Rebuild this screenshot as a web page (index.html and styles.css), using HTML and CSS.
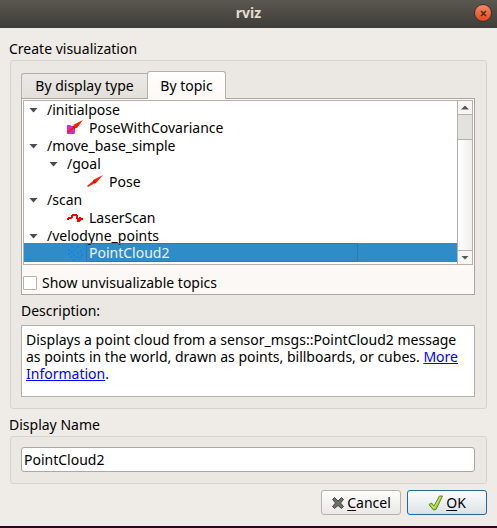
FILE: index.html
```html
<!DOCTYPE html>
<html lang="en">
<head>
<meta charset="utf-8">
<title>rviz</title>
<link rel="stylesheet" href="styles.css">
</head>
<body>
<header class="titlebar">
  <h1 class="title">rviz</h1>
  <button class="close" type="button" aria-label="Close">
    <svg width="7" height="7" viewBox="0 0 7 7"><path d="M1 1l5 5M6 1l-5 5" stroke="#4a2a1a" stroke-width="1.5"/></svg>
  </button>
</header>
<form class="dialog">
  <h2 class="heading">Create visualization</h2>
  <section class="group group-main">
    <div class="tabs" role="tablist">
      <button class="tab" type="button" role="tab" aria-selected="false">By display type</button>
      <button class="tab tab-active" type="button" role="tab" aria-selected="true">By topic</button>
    </div>
    <div class="pane" role="tabpanel">
      <div class="tree-box">
        <ul class="tree" role="tree">
          <li class="row" role="treeitem"><button class="arrow" type="button" aria-label="Collapse"></button>/initialpose</li>
          <li class="row leaf" role="treeitem">
            <svg class="icon" width="16" height="16" viewBox="0 0 16 16"><path d="M0 5h3l2 1h2l1 3v4l-1 1H0z" fill="#c832c8"/><path d="M0 12L7 6 6 5 16 0 10 8 8 8l-7 5z" fill="#ff1e00"/><path d="M6 6l3 2-2 1z" fill="#b01400"/></svg>
            <span class="label">PoseWithCovariance</span></li>
          <li class="row" role="treeitem"><button class="arrow" type="button" aria-label="Collapse"></button>/move_base_simple</li>
          <li class="row level-2" role="treeitem"><button class="arrow" type="button" aria-label="Collapse"></button>/goal</li>
          <li class="row leaf leaf-deep" role="treeitem">
            <svg class="icon" width="16" height="16" viewBox="0 0 16 16"><path d="M0 12L6 7 6 6 16 1 9 9 8 9l-7 4z" fill="#ff1e00"/><path d="M6 7l3 1-1 2z" fill="#b01400"/></svg>
            <span class="label">Pose</span></li>
          <li class="row" role="treeitem"><button class="arrow" type="button" aria-label="Collapse"></button>/scan</li>
          <li class="row leaf" role="treeitem">
            <svg class="icon" width="16" height="16" viewBox="0 0 16 16"><path d="M0 8h2v2H0zM1 7h4v2H1zM4 5h2v3H4zM5 4h5v2H5zM9 5h2v4H9zM10 8h2v4h-2zM11 10h2v2h-2zM12 7h2v4h-2zM13 8h3v2h-3z" fill="#f00"/></svg>
            <span class="label">LaserScan</span></li>
          <li class="row" role="treeitem"><button class="arrow" type="button" aria-label="Collapse"></button>/velodyne_points</li>
          <li class="row leaf selected" role="treeitem" aria-selected="true">
            <svg class="icon" width="16" height="16" viewBox="0 0 16 16"><path d="M5 1h2v2H5zM10 1h2v2h-2zM1 4h2v2H1zM7 4h2v2H7zM13 5h2v2h-2zM4 6h2v2H4zM10 7h2v2h-2zM1 8h2v2H1zM6 9h2v2H6zM14 9h2v2h-2zM3 11h2v2H3zM9 11h2v2H9zM12 12h2v2h-2zM6 14h2v2H6z" fill="#1785e4"/></svg>
            <span class="label current">PointCloud2</span></li>
        </ul>
        <div class="scrollbar" aria-hidden="true">
          <span class="step"><i class="tri tri-up"></i></span>
          <span class="groove"></span>
          <span class="thumb"></span>
          <span class="step step-down"><i class="tri"></i></span>
        </div>
      </div>
      <label class="check"><input type="checkbox">Show unvisualizable topics</label>
    </div>
    <h3 class="heading description-heading">Description:</h3>
    <p class="description">Displays a point cloud from a sensor_msgs::PointCloud2 message as points in the world, drawn as points, billboards, or cubes. <a href="#more">More Information</a>.</p>
  </section>
  <label class="heading name-heading" for="display-name">Display Name</label>
  <section class="group group-name">
    <input class="name" id="display-name" type="text" value="PointCloud2">
  </section>
  <footer class="actions">
    <button class="button" type="button">
      <svg width="14" height="14" viewBox="0 0 14 14"><path d="M3.5 1.5L7 5l3.500-3.500 2 2L9.500 7l3 3.500-2 2L7 9.500l-3.500 3-2-2L4.500 7l-3-3.500z" fill="#6c6c6a" stroke="#484846" stroke-linejoin="round"/></svg>
      <span><u>C</u>ancel</span>
    </button>
    <button class="button button-ok" type="submit">
      <svg width="16" height="16" viewBox="0 0 16 16"><path d="M1 9.500l2.500-1.500L6 11 11.500 1l3 0L8 14.500l-2.500 0.500z" fill="#a4cf3c" stroke="#5f8a1c" stroke-linejoin="round"/><path d="M3 9.500l3 3.500L12.500 2" fill="none" stroke="#cde87a"/></svg>
      <span><u>O</u>K</span>
    </button>
  </footer>
</form>
</body>
</html>
```
FILE: styles.css
```css
* { box-sizing: border-box; }

body {
  margin: 0;
  min-height: 100vh;
  display: flex;
  flex-direction: column;
  background: #efebe7;
  border-bottom: 2px solid #2c001e;
  color: #000;
  font: 14px/18px "Noto Sans", "Open Sans", sans-serif;
}

button, input { font: inherit; color: inherit; margin: 0; }

.titlebar {
  display: grid;
  grid-template-columns: 20px 1fr 20px;
  align-items: center;
  height: 28px;
  padding: 0 3px 2px;
  background: linear-gradient(#5a574f, #3e3d38);
}

.title {
  grid-column: 2;
  margin: 0;
  text-align: center;
  font-size: 14px;
  line-height: 18px;
  color: #e2dccf;
}

.close {
  display: flex;
  align-items: center;
  justify-content: center;
  width: 18px;
  height: 18px;
  padding: 0;
  border: 1px solid #35332e;
  border-radius: 50%;
  background: linear-gradient(#f58a68, #e2491c);
}

.dialog { padding: 12px 10px 10px 9px; }

.heading {
  display: block;
  margin: 0;
  font-size: 14px;
  font-weight: 400;
  line-height: 18px;
}

.group {
  border: 1px solid #d6d2ce;
  border-radius: 3px;
  background: #ebe8e4;
  padding: 10px 11px 11px 10px;
}

.dialog > .group { margin-left: 1px; }

.group-main { margin-top: 2px; }

.tabs { display: flex; align-items: flex-end; }

.tab {
  height: 25px;
  padding: 0 11px;
  border: 1px solid #b4b0ac;
  border-right: 0;
  border-bottom: 0;
  border-radius: 3px 0 0 0;
  background: linear-gradient(#ebe8e5, #e3e0dc);
  flex: 0 0 126px;
}

.tab-active {
  height: 28px;
  margin-bottom: -1px;
  border-right: 1px solid #b4b0ac;
  border-radius: 3px 3px 0 0;
  background: linear-gradient(#fff, #fcf8f5);
  flex-basis: 79px;
  z-index: 1;
}

.pane {
  border: 1px solid #a9a5a2;
  background: #fcf8f5;
  padding: 1px 1px 2px;
}

.tree-box {
  display: flex;
  border: 1px solid #b4b1ae;
  background: #fff;
}

.tree {
  flex: 1;
  margin: 0;
  padding: 0 0 2px;
  list-style: none;
}

.row {
  display: flex;
  align-items: center;
  height: 18px;
  padding-left: 4px;
}

.level-2 { padding-left: 24px; }
.leaf { padding-left: 43px; }
.leaf-deep { padding-left: 63px; }

.arrow {
  width: 19px;
  height: 18px;
  padding: 0 0 0 1px;
  border: 0;
  background: none;
}

.arrow::before {
  content: "";
  display: block;
  width: 9px;
  height: 5px;
  background: #4c4c4c;
  clip-path: polygon(0 0, 100% 0, 50% 100%);
}

.icon { flex: none; margin-right: 3px; }
.label { padding-left: 3px; }

.selected {
  height: 19px;
  margin-top: -2px;
  background: #308cc6;
  color: #eaf2f8;
}

.current {
  width: 272px;
  height: 19px;
  padding-left: 2px;
  border: 1px solid #2a7cb0;
  border-radius: 1px;
  line-height: 17px;
}

.scrollbar {
  display: flex;
  flex-direction: column;
  width: 15px;
  border-left: 1px solid #b4b1ae;
}

.step {
  display: flex;
  align-items: center;
  justify-content: center;
  height: 14px;
  border-bottom: 1px solid #b4b1ae;
  background: #f7f6f5;
}

.step-down { border-top: 1px solid #b4b1ae; border-bottom: 0; }

.tri {
  width: 8px;
  height: 4px;
  background: #555;
  clip-path: polygon(0 0, 100% 0, 50% 100%);
}

.tri-up { clip-path: polygon(50% 0, 100% 100%, 0 100%); }

.groove { height: 25px; background: #e3e2df; border-bottom: 1px solid #b4b1ae; }
.thumb { flex: 1; background: linear-gradient(90deg, #fff, #f0efec); }

.check {
  display: flex;
  align-items: center;
  gap: 5px;
  margin-top: 9px;
}

.check input {
  appearance: none;
  width: 14px;
  height: 14px;
  border: 1px solid #b4b1ae;
  border-radius: 1px;
  background: #fff;
}

.description-heading { margin-top: 7px; }

.description {
  min-height: 72px;
  margin: 5px 0 0;
  padding: 5px 4px;
  border: 1px solid #b4b1ae;
  background: #fff;
  line-height: 17px;
}

.description a { color: #00f; }

.name-heading { margin-top: 7px; }
.group-name { margin-top: 2px; }

.name {
  display: block;
  width: 100%;
  height: 25px;
  padding: 0 2px;
  border: 1px solid #aaa7a4;
  border-radius: 3px;
  background: #fff;
}

.actions {
  display: flex;
  justify-content: flex-end;
  gap: 6px;
  margin-top: 6px;
}

.button {
  display: flex;
  align-items: center;
  justify-content: center;
  gap: 2px;
  width: 80px;
  height: 25px;
  padding: 0;
  border: 1px solid #b4b1ae;
  border-radius: 3px;
  background: linear-gradient(#fdfdfc, #ebe8e6);
}

.button u { text-underline-offset: 2px; }

.button-ok {
  border-color: #20699a;
  background: linear-gradient(#fcfdfd, #dbe2e6);
}
```
